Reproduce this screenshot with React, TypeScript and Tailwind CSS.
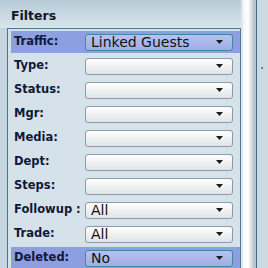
import React from "react";

type Row = { label: string; value?: string; active?: boolean };

const rows: Row[] = [
  { label: "Traffic:", value: "Linked Guests", active: true },
  { label: "Type:" },
  { label: "Status:" },
  { label: "Mgr:" },
  { label: "Media:" },
  { label: "Dept:" },
  { label: "Steps:" },
  { label: "Followup :", value: "All" },
  { label: "Trade:", value: "All" },
  { label: "Deleted:", value: "No", active: true },
];

const Caret = () => (
  <svg width="7" height="4" viewBox="0 0 7 4" className="shrink-0">
    <path d="M0 0h7L3.5 4z" fill="#1a1a1a" />
  </svg>
);

const FilterRow = ({ label, value, active }: Row) => (
  <div
    className={`flex items-center h-[22px] mb-[2px] pl-[3px] pr-[7px] ${
      active ? "bg-[#8d9fe0]" : ""
    }`}
  >
    <span className="w-[71px] shrink-0 text-[11.5px] font-bold text-[#10183a] whitespace-nowrap">
      {label}
    </span>
    <div
      className={`flex-1 h-[17px] flex items-center pl-[5px] pr-[9px] rounded-[3px] border ${
        active
          ? "border-[#3c8c98] bg-gradient-to-b from-[#b6c2f0] to-[#a0ace6]"
          : "border-[#8c9aa8] bg-gradient-to-b from-white to-[#e0e4e8]"
      }`}
    >
      <span className="flex-1 text-[14px] leading-none text-[#101010] whitespace-nowrap">
        {value ?? ""}
      </span>
      <Caret />
    </div>
  </div>
);

export default function App() {
  return (
    <div
      className="w-[268px] h-[268px] overflow-hidden flex bg-[#c6d6e0]"
      style={{ fontFamily: '"DejaVu Sans", Verdana, sans-serif' }}
    >
      <div className="w-[241px] shrink-0 flex flex-col">
        <div className="h-[28px] shrink-0 flex items-center pl-[11px] pt-[4px] bg-gradient-to-b from-[#b6cad6] to-[#dae5ec]">
          <span className="text-[12.5px] font-bold text-[#141428]">Filters</span>
        </div>
        <div className="flex-1 ml-[7px] border-l border-t border-r border-[#4f7696] bg-[#d6e2ea] pt-[2px] pl-[3px]">
          {rows.map((r) => (
            <FilterRow key={r.label} {...r} />
          ))}
        </div>
      </div>
      <div className="w-[2px] bg-[#dfe8ee]" />
      <div className="w-[10px] bg-gradient-to-r from-[#f4f6f8] via-[#ffffff] to-[#c8ced4]" />
      <div className="w-[3px] bg-[#b8c6d0]" />
      <div className="w-[1px] bg-[#3e6a8c]" />
      <div className="flex-1 bg-[#cbdae3] pt-[67px] pl-[4px]">
        <div className="w-[2px] h-[2px] bg-[#6a8296]" />
      </div>
    </div>
  );
}
